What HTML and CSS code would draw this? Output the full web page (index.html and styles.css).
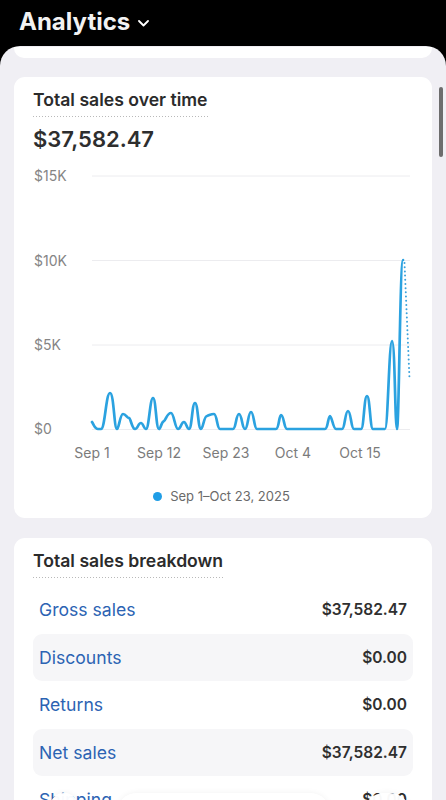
FILE: index.html
```html
<!DOCTYPE html>
<html lang="en">
<head>
    <meta charset="UTF-8">
    <meta name="viewport" content="width=device-width, initial-scale=1.0">
    <title>Analytics</title>
    <link rel="stylesheet" href="styles.css">
</head>
<body>
    <div class="top-bar">
        <span class="top-title">Analytics</span>
        <svg class="chevron" width="11" height="7" viewBox="0 0 11 7">
            <path d="M1 1l4.5 4.5L10 1" fill="none" stroke="#fff" stroke-width="1.8" stroke-linecap="round" stroke-linejoin="round"/>
        </svg>
    </div>

    <div class="sheet">
        <div class="prev-card"></div>

        <div class="card">
            <div class="card-title">Total sales over time</div>
            <div class="big-amount">$37,582.47</div>

            <svg class="chart" width="380" height="305" viewBox="33 160 380 305">
                <g stroke="#ececef" stroke-width="1">
                    <line x1="92" y1="175" x2="410" y2="175"/>
                    <line x1="92" y1="259.5" x2="410" y2="259.5"/>
                    <line x1="92" y1="344" x2="410" y2="344"/>
                    <line x1="92" y1="428.5" x2="410" y2="428.5"/>
                </g>
                <g class="y-labels">
                    <text x="34" y="180">$15K</text>
                    <text x="34" y="265">$10K</text>
                    <text x="34" y="349">$5K</text>
                    <text x="34" y="433">$0</text>
                </g>
                <g class="x-labels" text-anchor="middle">
                    <text x="92" y="457">Sep 1</text>
                    <text x="159" y="457">Sep 12</text>
                    <text x="226" y="457">Sep 23</text>
                    <text x="293" y="457">Oct 4</text>
                    <text x="360" y="457">Oct 15</text>
                </g>
                <polyline points="404.5,262 409.5,378" fill="none" stroke="#3aa2dc" stroke-width="2" stroke-linecap="round" stroke-dasharray="0 4.2"/>
                <path fill="none" stroke="#2ba2e0" stroke-width="2.7" stroke-linejoin="round" stroke-linecap="round"
                      d="M92 421 C94 424, 95 428, 98 428 L101 428
                         C105 428, 106 392, 110 392 C114 392, 114 428, 117 428
                         C119 428, 120 413, 123 413 C126 413, 127 417, 129 417
                         C131 418, 132 428, 135 428
                         C138 428, 138 422, 141 422 C143 422, 144 428, 146 428
                         C149 428, 150 397, 153 397 C156 397, 156 428, 159 428
                         C161 428, 161 421, 164 420 C166 419, 167 412, 171 412
                         C174 412, 175 428, 178 428
                         C181 428, 181 421, 184 421 C186 421, 187 428, 189 428
                         C192 428, 192 402, 195 402 C198 402, 198 428, 201 428
                         C203 428, 204 415, 207 415 C210 414, 211 413, 214 413
                         C217 413, 217 428, 220 428 L233 428
                         C236 428, 236 413, 239 413 C242 413, 242 428, 245 428
                         C248 428, 248 411, 251 411 C254 411, 254 428, 257 428 L276 428
                         C279 428, 279 414, 281 414 C284 414, 284 428, 287 428 L325 428
                         C328 428, 328 415, 330 415 C332 415, 333 428, 336 428 L342 428
                         C345 428, 345 410, 348 410 C351 410, 351 428, 354 428 L361 428
                         C364 428, 364 395, 367 395 C370 395, 370 428, 373 428 L385 428
                         C388 428, 389 340, 392 340 C395 340, 395 428, 397 428
                         C399 428, 400 259, 403 259"/>
            </svg>

            <div class="legend">
                <span class="legend-dot"></span>
                <span>Sep 1–Oct 23, 2025</span>
            </div>
        </div>

        <div class="card">
            <div class="card-title">Total sales breakdown</div>
            <div class="rows">
                <div class="row">
                    <span class="row-label">Gross sales</span>
                    <span class="row-value">$37,582.47</span>
                </div>
                <div class="row shaded">
                    <span class="row-label">Discounts</span>
                    <span class="row-value">$0.00</span>
                </div>
                <div class="row">
                    <span class="row-label">Returns</span>
                    <span class="row-value">$0.00</span>
                </div>
                <div class="row shaded">
                    <span class="row-label">Net sales</span>
                    <span class="row-value">$37,582.47</span>
                </div>
                <div class="row">
                    <span class="row-label">Shipping</span>
                    <span class="row-value">$0.00</span>
                </div>
            </div>
        </div>
    </div>

    <div class="scrollbar"></div>

    <div class="bottom-float">
        <span class="float-bubble left"></span>
        <span class="float-pill"></span>
        <span class="float-bubble right"></span>
    </div>
</body>
</html>
```

FILE: styles.css
```css
* {
    box-sizing: border-box;
}

body {
    margin: 0;
    height: 800px;
    overflow: hidden;
    background: #000;
    font-family: Inter, "Noto Sans", sans-serif;
    color: #303030;
}

.top-bar {
    height: 46px;
    display: flex;
    align-items: center;
    gap: 8px;
    padding: 0 0 3px 19px;
}

.top-title {
    color: #f2f2f2;
    font-size: 24px;
    font-weight: 700;
    letter-spacing: 0;
}

.chevron {
    margin-top: 4px;
}

.sheet {
    background: #f0eff4;
    border-radius: 20px 20px 0 0;
    padding: 1px 14px 0;
    min-height: 760px;
}

.prev-card {
    height: 11px;
    background: #fff;
    border-radius: 0 0 10px 10px;
    margin-bottom: 19px;
}

.card {
    background: #fff;
    border-radius: 11px;
    padding: 12px 19px 13px;
    margin-bottom: 20px;
}

.card-title {
    display: inline-block;
    font-size: 17.6px;
    font-weight: 600;
    line-height: 22px;
    color: #2b2b2b;
    padding-bottom: 6px;
    background-image: linear-gradient(to right, #b9b9b9 45%, transparent 0);
    background-size: 3px 1.5px;
    background-repeat: repeat-x;
    background-position: left bottom 0;
}

.big-amount {
    font-size: 22px;
    font-weight: 600;
    line-height: 28px;
    margin-top: 8px;
    color: #2e2e2e;
}

.chart {
    display: block;
    margin-top: 8px;
}

.y-labels text,
.x-labels text {
    font-family: Inter, "Noto Sans", sans-serif;
    font-size: 14px;
    fill: #858585;
}

.x-labels text {
    fill: #7b7b7b;
}

.legend {
    display: flex;
    justify-content: center;
    align-items: center;
    gap: 8px;
    margin-top: 21px;
    font-size: 13px;
    line-height: 18px;
    color: #6a6a6a;
    padding-right: 3px;
}

.legend-dot {
    width: 9px;
    height: 9px;
    border-radius: 50%;
    background: #1f9de6;
}

.rows {
    margin-top: 8px;
}

.row {
    height: 47.5px;
    display: flex;
    align-items: center;
    justify-content: space-between;
    padding: 0 6px;
    border-radius: 9px;
}

.row.shaded {
    background: #f6f6f8;
}

.row-label {
    font-size: 17.6px;
    color: #2c63b3;
}

.row-value {
    font-size: 15.5px;
    font-weight: 600;
    color: #2f2f2f;
}

.scrollbar {
    position: absolute;
    left: 439px;
    top: 87px;
    width: 4px;
    height: 70px;
    border-radius: 2px;
    background: #6d6d6d;
}

.bottom-float {
    position: absolute;
    left: 0;
    right: 0;
    top: 792px;
    height: 40px;
}

.float-bubble,
.float-pill {
    position: absolute;
    top: 1px;
    height: 40px;
    background: rgba(255, 255, 255, 0.97);
    border-radius: 20px;
    box-shadow: 0 0 6px rgba(0, 0, 0, 0.06);
}

.float-bubble.left {
    left: 50px;
    width: 28px;
}

.float-pill {
    left: 117px;
    width: 213px;
}

.float-bubble.right {
    left: 364px;
    width: 46px;
}
```
